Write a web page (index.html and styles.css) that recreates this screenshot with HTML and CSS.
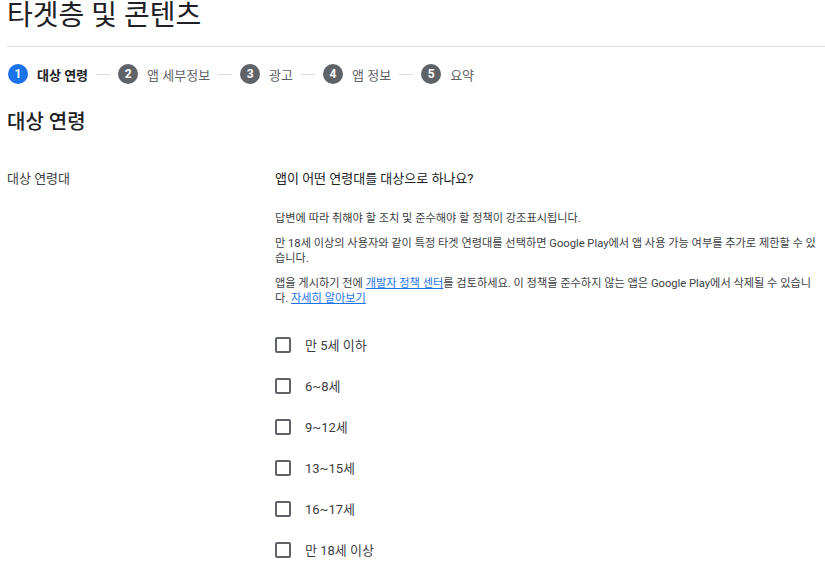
FILE: index.html
```html
<!DOCTYPE html>
<html lang="ko">
<head>
<meta charset="utf-8">
<link rel="stylesheet" href="styles.css">
</head>
<body>
<div class="page">
  <h1 class="title">타겟층 및 콘텐츠</h1>
  <div class="divider"></div>
  <ol class="stepper">
    <li class="step active"><span class="num">1</span><span class="label">대상 연령</span></li>
    <li class="sep"></li>
    <li class="step"><span class="num">2</span><span class="label">앱 세부정보</span></li>
    <li class="sep"></li>
    <li class="step"><span class="num">3</span><span class="label">광고</span></li>
    <li class="sep"></li>
    <li class="step"><span class="num">4</span><span class="label">앱 정보</span></li>
    <li class="sep"></li>
    <li class="step"><span class="num">5</span><span class="label">요약</span></li>
  </ol>
  <h2 class="section-title">대상 연령</h2>
  <div class="row">
    <div class="row-label">대상 연령대</div>
    <div class="row-body">
      <div class="question">앱이 어떤 연령대를 대상으로 하나요?</div>
      <p class="para first">답변에 따라 취해야 할 조치 및 준수해야 할 정책이 강조표시됩니다.</p>
      <p class="para">만 18세 이상의 사용자와 같이 특정 타겟 연령대를 선택하면 Google Play에서 앱 사용 가능 여부를 추가로 제한할 수 있습니다.</p>
      <p class="para">앱을 게시하기 전에 <a href="#" class="link">개발자 정책 센터</a>를 검토하세요. 이 정책을 준수하지 않는 앱은 Google Play에서 삭제될 수 있습니다. <a href="#" class="link">자세히 알아보기</a></p>
      <ul class="checks">
        <li class="check"><span class="box"></span><span class="check-label">만 5세 이하</span></li>
        <li class="check"><span class="box"></span><span class="check-label">6~8세</span></li>
        <li class="check"><span class="box"></span><span class="check-label">9~12세</span></li>
        <li class="check"><span class="box"></span><span class="check-label">13~15세</span></li>
        <li class="check"><span class="box"></span><span class="check-label">16~17세</span></li>
        <li class="check"><span class="box"></span><span class="check-label">만 18세 이상</span></li>
      </ul>
    </div>
  </div>
</div>
</body>
</html>
```
FILE: styles.css
```css
* { box-sizing: border-box; }
html, body { margin: 0; padding: 0; background: #fff; }
body {
  font-family: Roboto, "Noto Sans CJK KR", sans-serif;
  color: #202124;
}
.page { padding: 0 0 0 7px; }
.title {
  margin: 0;
  font-size: 28px;
  font-weight: 400;
  line-height: 32px;
  height: 32px;
  color: #202124;
}
.divider {
  margin-top: 14px;
  height: 1px;
  background: #dadce0;
}
.stepper {
  list-style: none;
  margin: 0;
  padding: 0 0 0 1px;
  display: flex;
  align-items: center;
  height: 54px;
}
.step { display: flex; align-items: center; gap: 9px; }
.num {
  width: 20px; height: 20px;
  border-radius: 50%;
  background: #5f6368;
  color: #fff;
  font-size: 12px;
  font-weight: 700;
  display: flex; align-items: center; justify-content: center;
}
.step.active .num { background: #1a73e8; }
.label { font-size: 13px; color: #5f6368; }
.step.active .label { font-weight: 700; color: #202124; }
.sep { width: 14px; height: 1px; background: #dadce0; margin: 0 8px; }
.section-title {
  margin: 0;
  padding-top: 6px;
  font-size: 20px;
  font-weight: 500;
  line-height: 30px;
}
.row { display: flex; margin-top: 32px; }
.row-label { width: 268px; flex: none; font-size: 13px; line-height: 20px; color: #3c4043; }
.row-body { flex: 1; padding-right: 7px; }
.question { font-size: 13px; line-height: 20px; color: #202124; }
.para {
  margin: 10px 0 0;
  font-size: 11.2px;
  line-height: 15px;
  color: #3c4043;
}
.para.first { margin-top: 22px; }
.link {
  display: inline-block;
  line-height: 15px;
  color: #1a73e8;
  text-decoration: underline;
}
.checks { list-style: none; margin: 18px 0 0; padding: 0; }
.check { display: flex; align-items: center; height: 41px; }
.box {
  width: 16px; height: 16px;
  border: 2px solid #5f6368;
  border-radius: 2px;
  flex: none;
}
.check-label { margin-left: 14px; font-size: 13px; color: #3c4043; }
```
